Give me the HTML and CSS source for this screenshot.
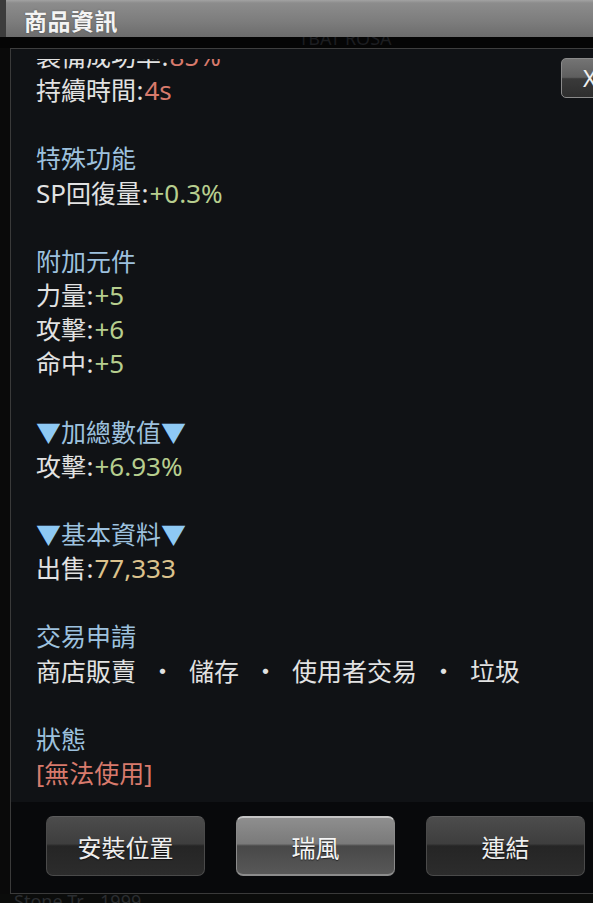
FILE: index.html
```html
<!DOCTYPE html>
<html lang="zh-Hant">
<head>
<meta charset="utf-8">
<title>商品資訊</title>
<link rel="stylesheet" href="styles.css">
</head>
<body>
<div class="screen">
  <header class="titlebar"><h1 class="title">商品資訊</h1></header>
  <div class="backdrop-strip"><span class="ghost-text">1BAT ROSA</span></div>
  <section class="panel">
    <div class="content">
      <button class="close-btn" type="button">X</button>
      <div class="viewport">
        <div class="lines">
          <p class="line">裝備成功率<span class="colon">:</span><span class="red">85%</span></p>
          <p class="line">持續時間<span class="colon">:</span><span class="red">4s</span></p>
          <p class="line blank"></p>
          <p class="line heading">特殊功能</p>
          <p class="line"><span class="lat">SP</span>回復量<span class="colon">:</span><span class="green">+0.3%</span></p>
          <p class="line blank"></p>
          <p class="line heading">附加元件</p>
          <p class="line">力量<span class="colon">:</span><span class="green">+5</span></p>
          <p class="line">攻擊<span class="colon">:</span><span class="green">+6</span></p>
          <p class="line">命中<span class="colon">:</span><span class="green">+5</span></p>
          <p class="line blank"></p>
          <p class="line heading"><span class="tri">▼</span>加總數值<span class="tri">▼</span></p>
          <p class="line">攻擊<span class="colon">:</span><span class="green">+6.93%</span></p>
          <p class="line blank"></p>
          <p class="line heading"><span class="tri">▼</span>基本資料<span class="tri">▼</span></p>
          <p class="line">出售<span class="colon">:</span><span class="gold">77,333</span></p>
          <p class="line blank"></p>
          <p class="line heading">交易申請</p>
          <p class="line">商店販賣<span class="dot">・</span>儲存<span class="dot">・</span>使用者交易<span class="dot">・</span>垃圾</p>
          <p class="line blank"></p>
          <p class="line heading">狀態</p>
          <p class="line red-text">[無法使用]</p>
        </div>
      </div>
    </div>
    <footer class="actions">
      <button class="btn" type="button">安裝位置</button>
      <button class="btn btn-active" type="button">瑞風</button>
      <button class="btn" type="button">連結</button>
    </footer>
  </section>
  <div class="backdrop-bottom"><span class="ghost-text">Stone Tr... 1999</span></div>
</div>
</body>
</html>
```
FILE: styles.css
```css
html, body {
  margin: 0;
  padding: 0;
  background: #070707;
}

.screen {
  width: 593px;
  height: 903px;
  overflow: hidden;
  background: #0a0a0a;
  font-family: "Noto Sans", "Noto Sans CJK TC", sans-serif;
  display: flex;
  flex-direction: column;
}

.titlebar {
  height: 37px;
  flex: none;
  box-sizing: border-box;
  background: linear-gradient(to bottom, #a2a2a2 0%, #8c8c8c 8%, #7c7c7c 60%, #6c6c6c 100%);
  border-left: 6px solid #3c3c3c;
  padding-left: 18px;
  display: flex;
  align-items: center;
}

.title {
  margin: 4px 0 0 0;
  font-family: "Noto Sans CJK TC", sans-serif;
  font-size: 23px;
  font-weight: 700;
  line-height: 1;
  color: #f4f4f4;
  text-shadow: 0 0 2px rgba(0, 0, 0, 0.35);
  letter-spacing: 0.5px;
}

.backdrop-strip {
  height: 11px;
  flex: none;
  background: #050505;
  overflow: hidden;
}

.backdrop-bottom {
  height: 9px;
  flex: none;
  background: #0b0c0b;
  overflow: hidden;
  padding-left: 14px;
}

.ghost-text {
  display: block;
  font-size: 18px;
  line-height: 14px;
  color: #2a2d30;
}

.backdrop-strip .ghost-text {
  margin-left: 298px;
  margin-top: -6px;
  color: #1c1d20;
}

.panel {
  margin-left: 10px;
  height: 846px;
  flex: none;
  box-sizing: border-box;
  border-left: 1px solid #3a3a3a;
  border-top: 1px solid #3e3e3e;
  border-bottom: 1px solid #3a3a3a;
  display: flex;
  flex-direction: column;
}

.content {
  position: relative;
  height: 753px;
  flex: none;
  box-sizing: border-box;
  background: #101215;
  padding: 10px 0 0 25px;
}

.viewport {
  height: 743px;
  overflow: hidden;
}

.lines {
  margin-top: -20px;
}

.line {
  margin: 0;
  height: 34.15px;
  font-size: 25px;
  line-height: 34.15px;
  color: #e2e2e2;
  white-space: nowrap;
}

.lat,
.green,
.red,
.gold {
  font-size: 26px;
}

.colon {
  font-size: 26px;
  margin: 0 1px 0 0.5px;
}

.heading {
  color: #9dc1de;
}

.tri {
  color: #8ec9f4;
}

.green {
  color: #b7ce8e;
}

.red,
.red-text {
  color: #d87a6c;
}

.gold {
  color: #dcc28c;
}

.dot {
  display: inline-block;
  margin: 0 14px;
  color: #e2e2e2;
}

.close-btn {
  position: absolute;
  top: 9px;
  right: -10px;
  width: 42px;
  height: 40px;
  box-sizing: border-box;
  border: 1px solid #8a8a8a;
  border-radius: 5px;
  background: linear-gradient(to bottom, #747474 0%, #5e5e5e 48%, #3a3a3a 52%, #2e2e2e 100%);
  color: #f0f0f0;
  font-family: "Noto Sans", "Liberation Sans", sans-serif;
  font-size: 23px;
  line-height: 1;
  padding: 0 0 0 21px;
  text-align: left;
}

.actions {
  flex: 1;
  background: #08090b;
  display: flex;
  gap: 31px;
  padding: 14px 0 0 35px;
  box-sizing: border-box;
}

.btn {
  width: 159px;
  height: 60px;
  box-sizing: border-box;
  border: 1px solid #4a4a4a;
  border-top-color: #5c5c5c;
  border-radius: 7px;
  background: linear-gradient(to bottom, #4c4c4c 0%, #3e3e3e 46%, #252525 50%, #2c2c2c 100%);
  color: #eeeeee;
  font-family: "Noto Sans CJK TC", sans-serif;
  font-size: 24px;
  line-height: 1;
  padding: 2px 0 0 0;
  text-shadow: 0 1px 1px rgba(0, 0, 0, 0.6);
}

.btn-active {
  border: 1px solid #8a8a8a;
  border-top: 2px solid #c4c4c4;
  border-bottom: 2px solid #8c8c8c;
  background: linear-gradient(to bottom, #8e8e8e 0%, #7a7a7a 46%, #484848 50%, #585858 100%);
  color: #f6f6f6;
}
```
